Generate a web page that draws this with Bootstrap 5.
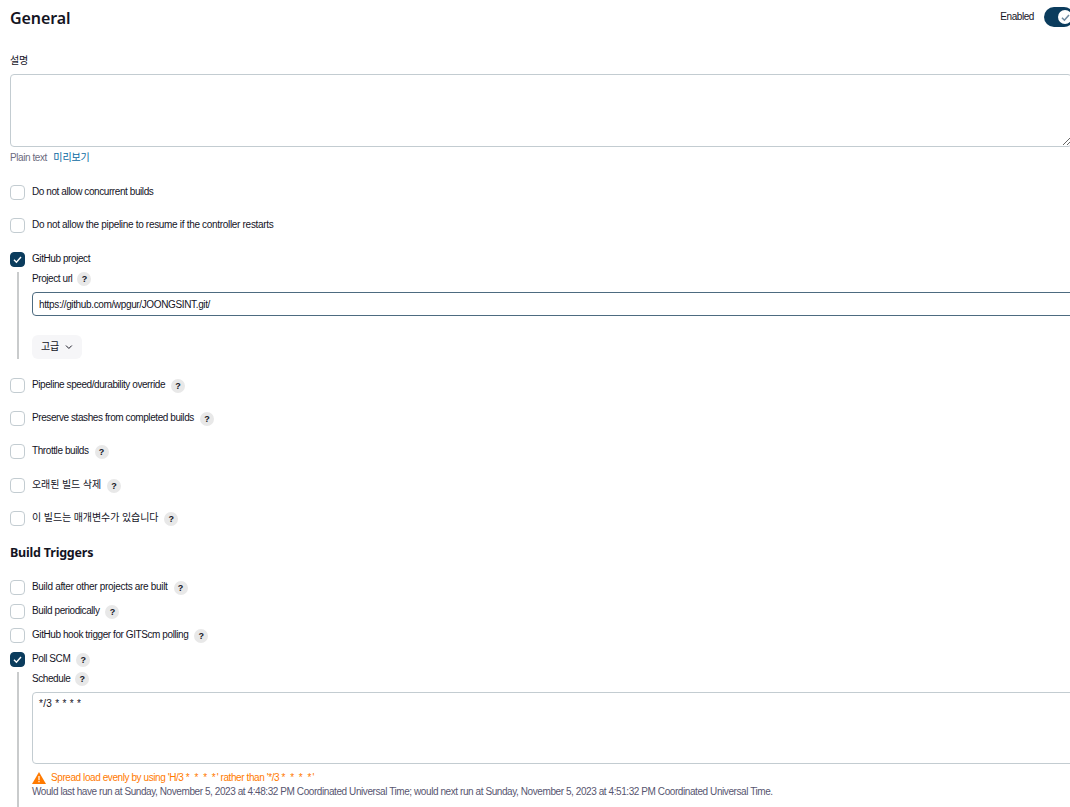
<!DOCTYPE html>
<html lang="ko">
<head>
<meta charset="utf-8">
<title>General</title>
<link href="https://cdn.jsdelivr.net/npm/bootstrap@5.3.0/dist/css/bootstrap.min.css" rel="stylesheet">
<style>
html,body{height:807px;overflow:hidden;background:#fff}
body{font-family:"Liberation Sans","Noto Sans CJK KR",sans-serif;font-size:10px;line-height:14px;color:#14141f;letter-spacing:-.42px}
.pg{width:1080px;padding:0 0 0 10px;position:relative}
.hd1{height:52px;padding-top:7px}
.hd1 h1{font-family:"Noto Sans",sans-serif;font-size:16px;line-height:22px;font-weight:600;margin:0;letter-spacing:-.1px}
.swi{width:30px;height:20px;border-radius:10px;background:#0b3c5d;position:relative;overflow:hidden}
.swi i{position:absolute;left:14px;top:3px;width:14px;height:14px;border-radius:50%;background:#fff}
.swi svg{position:absolute;left:17px;top:6px}
.hd1 .lbl{margin-right:10px}
.swbox{margin-right:6px}
.fl{height:14px;margin-top:2px}
.ko{letter-spacing:-.1px}
.wd{letter-spacing:-.31px}
.ta{display:block;width:1062px;height:73px;margin-top:6px;border:1px solid #c3ccd1;border-radius:4px;background:#fff;outline:0}
.pt{margin-top:4px;height:14px;color:#6d6b80}
.pt a{color:#0b6aa2;text-decoration:none;margin-left:4px}
.cr{display:flex;align-items:center;gap:7px}
.cb{flex:none;width:15px;height:15px;border:1px solid #c3ccd1;border-radius:4px;background:#fff;display:flex;align-items:center;justify-content:center}
.cb.on{background:#0b3c5d;border-color:#0b3c5d}
.hq{display:inline-flex;align-items:center;justify-content:center;width:14px;height:14px;border-radius:50%;background:#e8e8e8;color:#14141f;font-size:9px;font-weight:700;margin-left:5px;flex:none;letter-spacing:0}
.cr .hq{margin-left:-1px}
.cr span.t{position:relative;top:-1px}
.sub{margin-left:7px;border-left:2px solid #c9cbcc;padding-left:13px}
.inp{display:block;width:1060px;height:24px;border:1px solid #4d6b80;border-radius:4px;padding:0 6px;line-height:22px;background:#fff;color:#14141f;outline:0;letter-spacing:-.36px}
.adv{display:inline-flex;align-items:center;gap:6px;height:24px;width:50px;padding:0 9px;background:#f6f6f8;border:0;border-radius:6px;font-size:10px;color:#14141f;white-space:nowrap;letter-spacing:-.1px}
h2.bt{font-family:"Noto Sans",sans-serif;font-size:12.5px;line-height:18px;font-weight:700;margin:0;letter-spacing:-.2px}
.sch{display:block;width:1060px;height:72px;border:1px solid #c3ccd1;border-radius:4px;padding:4px 6px;background:#fff;color:#14141f;letter-spacing:.3px;outline:0;line-height:14px}
.warn{color:#ff7a00;display:flex;align-items:center;gap:5px;height:14px}
.ast{letter-spacing:1px}
.mut{color:#585670;height:14px;white-space:nowrap}
.fade{position:absolute;left:0;right:0;top:780px;height:27px;background:linear-gradient(rgba(245,245,245,0),#f3f3f3);pointer-events:none}
.m33{margin-top:18px}
</style>
</head>
<body>
<div class="pg">
  <div class="hd1 d-flex justify-content-between align-items-start">
    <h1>General</h1>
    <div class="d-flex align-items-center swbox">
      <span class="lbl">Enabled</span>
      <div class="swi"><i></i><svg width="9" height="9" viewBox="0 0 9 9"><path d="M1 4.8 3.4 7.2 8 2" fill="none" stroke="#6f8aa0" stroke-width="1.6"/></svg></div>
    </div>
  </div>
  <div class="fl ko">설명</div>
  <textarea class="ta" aria-label="설명"></textarea>
  <div class="pt">Plain text <a class="ko" href="#">미리보기</a></div>

  <div class="cr" style="margin-top:20px"><div class="cb"></div><span class="t">Do not allow concurrent builds</span></div>
  <div class="cr m33"><div class="cb"></div><span class="t wd">Do not allow the pipeline to resume if the controller restarts</span></div>
  <div class="cr" style="margin-top:19px"><div class="cb on"><svg width="9" height="9" viewBox="0 0 9 9"><path d="M1 4.8 3.4 7.2 8 2" fill="none" stroke="#fff" stroke-width="1.4"/></svg></div><span class="t">GitHub project</span></div>
  <div class="sub" style="margin-top:5px;height:87px;">
    <div class="d-flex align-items-center" style="height:14px">Project url<span class="hq">?</span></div>
    <input class="inp" style="margin-top:6px" type="text" value="https://github.com/wpgur/JOONGSINT.git/" aria-label="Project url">
    <button class="adv" style="margin-top:19px" type="button">고급<svg width="8" height="6" viewBox="0 0 8 6"><path d="M1 1.5 4 4.5 7 1.5" fill="none" stroke="#14141f" stroke-width="1"/></svg></button>
  </div>
  <div class="cr" style="margin-top:19px"><div class="cb"></div><span class="t">Pipeline speed/durability override</span><span class="hq">?</span></div>
  <div class="cr m33"><div class="cb"></div><span class="t">Preserve stashes from completed builds</span><span class="hq">?</span></div>
  <div class="cr m33"><div class="cb"></div><span class="t">Throttle builds</span><span class="hq">?</span></div>
  <div class="cr" style="margin-top:19px"><div class="cb"></div><span class="t ko">오래된 빌드 삭제</span><span class="hq">?</span></div>
  <div class="cr m33"><div class="cb"></div><span class="t ko">이 빌드는 매개변수가 있습니다</span><span class="hq">?</span></div>
  <h2 class="bt" style="margin-top:18px">Build Triggers</h2>
  <div class="cr" style="margin-top:18px"><div class="cb"></div><span class="t wd">Build after other projects are built</span><span class="hq">?</span></div>
  <div class="cr" style="margin-top:9px"><div class="cb"></div><span class="t">Build periodically</span><span class="hq">?</span></div>
  <div class="cr" style="margin-top:9px"><div class="cb"></div><span class="t">GitHub hook trigger for GITScm polling</span><span class="hq">?</span></div>
  <div class="cr" style="margin-top:9px"><div class="cb on"><svg width="9" height="9" viewBox="0 0 9 9"><path d="M1 4.8 3.4 7.2 8 2" fill="none" stroke="#fff" stroke-width="1.4"/></svg></div><span class="t">Poll SCM</span><span class="hq">?</span></div>
  <div class="sub" style="margin-top:5px;height:140px">
    <div class="d-flex align-items-center" style="height:14px">Schedule<span class="hq">?</span></div>
    <textarea class="sch" style="margin-top:6px" aria-label="Schedule">*/3 * * * *</textarea>
    <div class="warn" style="margin-top:7px"><svg width="14" height="12" viewBox="0 0 14 12"><path d="M7 0 14 12H0Z" fill="#ff7a00"/><path d="M6.4 4h1.2v4.2H6.4zM6.4 9h1.2v1.2H6.4z" fill="#fff"/></svg><span>Spread load evenly by using 'H/3 <span class="ast">* * * *</span>' rather than '*/3 <span class="ast">* * * *</span>'</span></div>
    <div class="mut">Would last have run at Sunday, November 5, 2023 at 4:48:32 PM Coordinated Universal Time; would next run at Sunday, November 5, 2023 at 4:51:32 PM Coordinated Universal Time.</div>
  </div>
  <div class="fade"></div>
</div>
</body>
</html>
